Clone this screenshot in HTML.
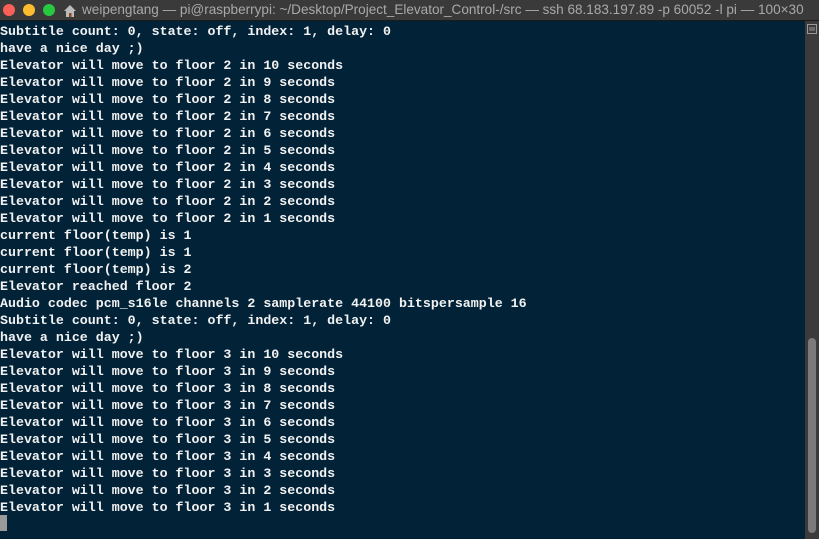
<!DOCTYPE html>
<html><head><style>
html,body{margin:0;padding:0;width:819px;height:539px;overflow:hidden;background:#022238;}
.tb{position:absolute;left:0;top:0;width:819px;height:20px;background:#3a3a3a;border-bottom:1px solid #1a1a1a;}
.dot{position:absolute;top:4px;width:12px;height:12px;border-radius:50%;}
.title{position:absolute;left:82px;top:2px;font:13.55px "Liberation Sans",sans-serif;color:#a9a9a9;white-space:nowrap;}
.term{position:absolute;left:0;top:23px;font:bold 13.3px/17px "Liberation Mono",monospace;color:#f2f2f2;white-space:pre;}
.sb{position:absolute;left:805px;top:21px;width:14px;height:518px;background:#3b3b3b;}
.thumb{position:absolute;left:808px;top:338px;width:8px;height:195px;background:#7b7b7b;border-radius:4px;}
.cur{position:absolute;left:0;top:515px;width:7px;height:16px;background:#9a9a9a;}
</style></head><body>
<div class="tb">
<div class="dot" style="left:3px;background:#fe5f57"></div>
<div class="dot" style="left:23px;background:#febc2e"></div>
<div class="dot" style="left:43px;background:#28c840"></div>
<svg style="position:absolute;left:63px;top:4px" width="14" height="13" viewBox="0 0 14 13"><path d="M1 7L7 1L13 7Z" fill="#bbb"/><rect x="3" y="6" width="8" height="7" fill="#bbb"/><rect x="6" y="9" width="2.5" height="4" fill="#8a4a20"/></svg>
<div class="title">weipengtang — pi@raspberrypi: ~/Desktop/Project_Elevator_Control-/src — ssh 68.183.197.89 -p 60052 -l pi — 100×30</div>
</div>
<div class="sb"></div>
<svg style="position:absolute;left:807px;top:24px" width="10" height="10" viewBox="0 0 10 10"><rect x="0.5" y="0.5" width="9" height="9" fill="none" stroke="#999"/><path d="M2 4H8M2 6H8" stroke="#999"/></svg>
<div class="thumb"></div>
<div class="term">Subtitle count: 0, state: off, index: 1, delay: 0
have a nice day ;)
Elevator will move to floor 2 in 10 seconds
Elevator will move to floor 2 in 9 seconds
Elevator will move to floor 2 in 8 seconds
Elevator will move to floor 2 in 7 seconds
Elevator will move to floor 2 in 6 seconds
Elevator will move to floor 2 in 5 seconds
Elevator will move to floor 2 in 4 seconds
Elevator will move to floor 2 in 3 seconds
Elevator will move to floor 2 in 2 seconds
Elevator will move to floor 2 in 1 seconds
current floor(temp) is 1
current floor(temp) is 1
current floor(temp) is 2
Elevator reached floor 2
Audio codec pcm_s16le channels 2 samplerate 44100 bitspersample 16
Subtitle count: 0, state: off, index: 1, delay: 0
have a nice day ;)
Elevator will move to floor 3 in 10 seconds
Elevator will move to floor 3 in 9 seconds
Elevator will move to floor 3 in 8 seconds
Elevator will move to floor 3 in 7 seconds
Elevator will move to floor 3 in 6 seconds
Elevator will move to floor 3 in 5 seconds
Elevator will move to floor 3 in 4 seconds
Elevator will move to floor 3 in 3 seconds
Elevator will move to floor 3 in 2 seconds
Elevator will move to floor 3 in 1 seconds</div>
<div class="cur"></div>
</body></html>
